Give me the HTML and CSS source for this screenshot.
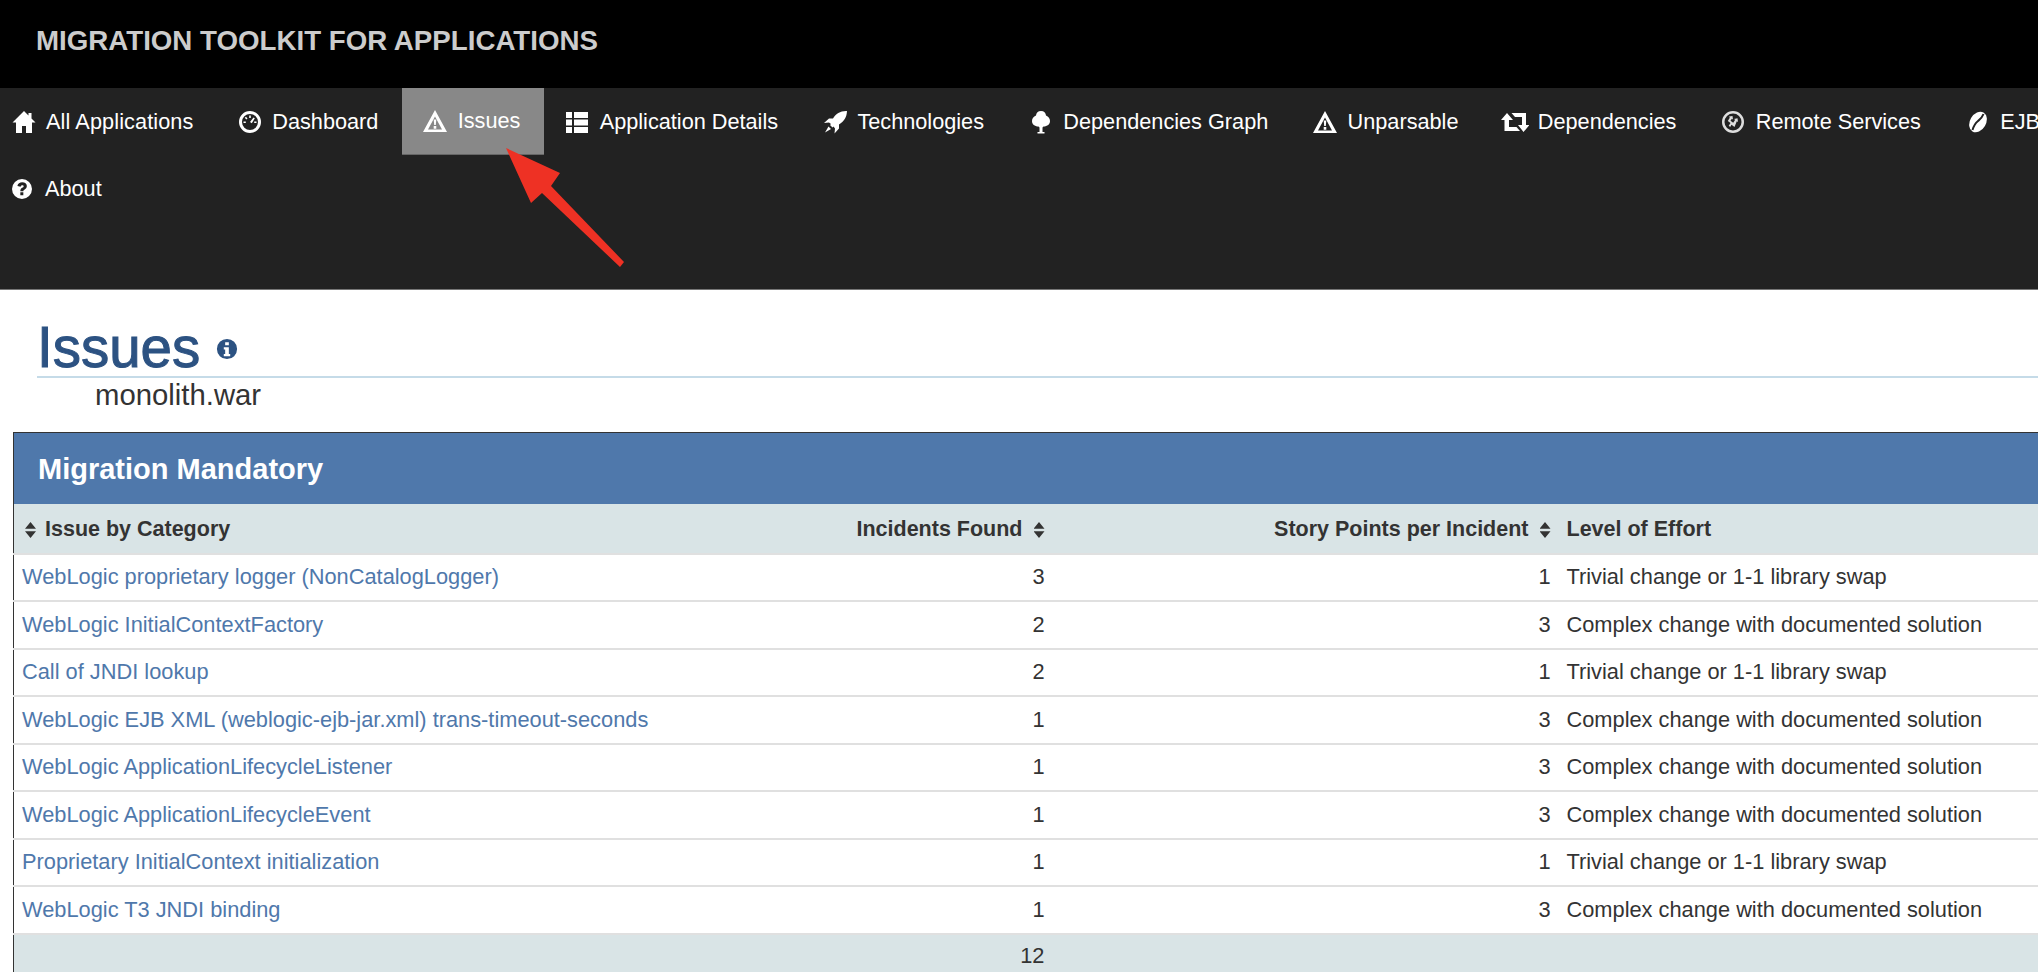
FILE: index.html
```html
<!DOCTYPE html>
<html lang="en">
<head>
<meta charset="utf-8">
<title>Issues - Migration Toolkit for Applications</title>
<link rel="stylesheet" href="styles.css">
</head>
<body>
<div class="page">
  <header class="brand">MIGRATION TOOLKIT FOR APPLICATIONS</header>
  <nav class="nav">
    <a class="nav-item edge home"><svg class="ico" viewBox="0 0 24 24"><path d="M12 1 .5 12.500h3.500V23h6v-7h4v7h6V12.500h3.500L19.500 8.500V3h-3v2.500z"/></svg>All Applications</a>
    <a class="nav-item"><svg class="ico" viewBox="0 0 24 24"><path fill-rule="evenodd" d="M12 1a11 11 0 1 0 0 22 11 11 0 0 0 0-22zm0 3a8 8 0 1 1 0 16 8 8 0 0 1 0-16z"/><path d="M11.200 5.500h1.600v2.500h-1.600zM6.800 7.800l1.200-1 1.500 1.800-1.200 1zM15.500 7.500l1.300.8-3 5-1.800-1.200zM5.500 11.500h2.300v1.500H5.500zM16.200 11.500h2.300v1.500h-2.300z"/></svg>Dashboard</a>
    <a class="nav-item active"><svg class="ico" viewBox="0 0 24 24"><path fill-rule="evenodd" d="M12 1 0 23h24zm0 6.500L19 20.500H5z"/><path d="M10.700 10.500h2.600l-.5 5.500h-1.600zM10.700 17h2.600v2.800h-2.600z"/></svg>Issues</a>
    <a class="nav-item"><svg class="ico" viewBox="0 0 24 24"><path d="M1 2h6v6H1zM1 9.500h6v6H1zM1 17h6v6H1zM9 2h14v6H9zM9 9.500h14v6H9zM9 17h14v6H9z"/></svg>Application Details</a>
    <a class="nav-item"><svg class="ico" viewBox="0 0 24 24"><path d="M23 1c-6 .3-10 2.500-13 7.500H6L1 13l5-.5 2 1.500-1 1 2.500 2.500 1-1 1.500 2-.5 5 4.500-5v-4c5-3 7.700-7 8-13.500zM5.500 16.500 2 22.500l6-3.500z"/></svg>Technologies</a>
    <a class="nav-item"><svg class="ico" viewBox="0 0 24 24"><path d="M12 1C9 1 7.200 3 7 5.500 4.500 6.500 3 8.500 3 11c0 3.200 2.700 5.500 6.500 5.500l1 1V22H8.500v1.500h7V22h-2v-4.500l1-1C18.300 16.500 21 14.200 21 11c0-2.500-1.500-4.500-4-5.500C16.800 3 15 1 12 1z"/></svg>Dependencies Graph</a>
    <a class="nav-item"><svg class="ico" viewBox="0 0 24 24"><path fill-rule="evenodd" d="M12 1 0 23h24zm0 6.500L19 20.500H5z"/><path d="M10.700 10.500h2.600l-.5 5.500h-1.600zM10.700 17h2.600v2.800h-2.600z"/></svg>Unparsable</a>
    <a class="nav-item"><svg class="ico ico-wide" viewBox="0 0 28 24"><path d="M6 3 0 10h3.500v11H19l-3.500-4H8V10h4zM10.500 3l3.500 4h7v8h-4l5.500 7 6-7h-3.500V3z"/></svg>Dependencies</a>
    <a class="nav-item"><svg class="ico" viewBox="0 0 24 24"><path fill-rule="evenodd" opacity=".85" d="M12 1a11 11 0 1 0 0 22 11 11 0 0 0 0-22zm0 2.500a8.500 8.500 0 1 1 0 17 8.500 8.500 0 0 1 0-17z"/><path opacity=".85" d="M8 6.500l3.500-.5.500 3.500-1.200-.8-1.300 2 2.700 2 2-3-1.300-.7 3.600-.8.500 3.800-1.200-.8L13.500 17l-3-2.200-1.300 2.200-1.500-1.200 1.800-2.800-2.700-2 2-3.300z"/></svg>Remote Services</a>
    <a class="nav-item"><svg class="ico" viewBox="0 0 24 24"><ellipse cx="12" cy="12" rx="8" ry="11" transform="rotate(30 12 12)"/><path class="bean-line" d="M17.500 4C16 8 14.500 9 12 11s-4 4-5.500 9"/></svg>EJBs</a>
    <a class="nav-item edge about"><svg class="ico ico-sm" viewBox="0 0 24 24"><path fill-rule="evenodd" d="M12 0a12 12 0 1 0 0 24 12 12 0 0 0 0-24zm.3 4c3.300 0 5.500 1.800 5.500 4.500 0 2.200-1.300 3.400-2.900 4.300-1 .6-1.300 1.100-1.300 1.900H10c0-2.100.8-3.200 2.200-4.100 1.100-.7 1.800-1.100 1.800-2 0-.8-.6-1.200-1.600-1.200-1.100 0-1.900.7-2.200 2L6.500 8.300C7.100 5.600 9.200 4 12.300 4zM10 16h3.600v3.500H10z"/></svg>About</a>
  </nav>
  <main>
    <section class="heading">
      <h1 class="title">Issues <svg class="info" viewBox="0 0 24 24"><path fill-rule="evenodd" d="M12 1a11 11 0 1 0 0 22 11 11 0 0 0 0-22zM10 4.500h4v3.500h-4zM8.500 10H14v7.500h1.500V20h-7v-2.500H10V12.500H8.500z"/></svg></h1>
      <div class="subtitle">monolith.war</div>
    </section>
    <table class="issues">
      <colgroup><col class="c1"><col class="c2"><col class="c3"><col class="c4"></colgroup>
      <thead>
        <tr class="band"><th colspan="4">Migration Mandatory</th></tr>
        <tr class="cols">
          <th class="left first"><span class="sort sort-l"></span>Issue by Category</th>
          <th class="num">Incidents Found<span class="sort sort-r"></span></th>
          <th class="num">Story Points per Incident<span class="sort sort-r"></span></th>
          <th class="left">Level of Effort</th>
        </tr>
      </thead>
      <tbody>
        <tr><td><a>WebLogic proprietary logger (NonCatalogLogger)</a></td><td class="num">3</td><td class="num">1</td><td>Trivial change or 1-1 library swap</td></tr>
        <tr><td><a>WebLogic InitialContextFactory</a></td><td class="num">2</td><td class="num">3</td><td>Complex change with documented solution</td></tr>
        <tr><td><a>Call of JNDI lookup</a></td><td class="num">2</td><td class="num">1</td><td>Trivial change or 1-1 library swap</td></tr>
        <tr><td><a>WebLogic EJB XML (weblogic-ejb-jar.xml) trans-timeout-seconds</a></td><td class="num">1</td><td class="num">3</td><td>Complex change with documented solution</td></tr>
        <tr><td><a>WebLogic ApplicationLifecycleListener</a></td><td class="num">1</td><td class="num">3</td><td>Complex change with documented solution</td></tr>
        <tr><td><a>WebLogic ApplicationLifecycleEvent</a></td><td class="num">1</td><td class="num">3</td><td>Complex change with documented solution</td></tr>
        <tr><td><a>Proprietary InitialContext initialization</a></td><td class="num">1</td><td class="num">1</td><td>Trivial change or 1-1 library swap</td></tr>
        <tr><td><a>WebLogic T3 JNDI binding</a></td><td class="num">1</td><td class="num">3</td><td>Complex change with documented solution</td></tr>
      </tbody>
      <tfoot>
        <tr><td></td><td class="num">12</td><td></td><td></td></tr>
      </tfoot>
    </table>
  </main>
  <svg class="arrow" viewBox="0 0 140 130"><path d="M6 8 60 33 51 46 124 122 120 127 42 53 31 63z"/></svg>
</div>
</body>
</html>
```
FILE: styles.css
```css
html, body { margin: 0; padding: 0; height: 972px; overflow: hidden; background: #fff; }
.page { position: relative; width: 2120px; height: 972px; overflow: hidden; font-family: "Liberation Sans", Arial, sans-serif; color: #333; }
.brand { height: 88px; box-sizing: border-box; background: #000; color: #ccc; font-size: 27.700px; font-weight: 700; line-height: 82px; padding-left: 36px; }
.nav { height: 202px; box-sizing: border-box; background: #222; border-bottom: 1px solid #777; display: flex; flex-wrap: wrap; align-content: flex-start; }
.nav-item { display: flex; align-items: center; gap: 10.300px; height: 67px; padding: 0 24px 0 21px; box-sizing: border-box; color: #fff; font-size: 21.700px; }
.nav-item.edge { padding-left: 12px; gap: 10px; }
.nav-item.home { padding-right: 23.500px; letter-spacing: 0.1px; }
.nav-item.active { background: #888; border-bottom: 1px solid #666; }
.ico { width: 24px; height: 24px; fill: #fff; flex: none; }
.ico-wide { width: 28px; margin: 0 -2px; }
.ico-sm { width: 20px; height: 20px; margin-right: 3px; }
.bean-line { fill: none; stroke: #222; stroke-width: 2; }
.heading { padding: 0 0 0 37px; }
.title { margin: 0; height: 88px; box-sizing: border-box; border-bottom: 2px solid #c5dbe8; padding-top: 29px; font-size: 56.500px; line-height: 58px; font-weight: 400; color: #2c5282; -webkit-text-stroke: 1px #2c5282; }
.info { width: 22px; height: 22px; fill: #2c5282; vertical-align: 7px; stroke: none; }
.subtitle { margin-left: 58px; font-size: 29.300px; line-height: 34px; color: #333; }
.issues { margin: 20px 0 0 13px; width: 2090px; table-layout: fixed; border-collapse: collapse; border: 1px solid #333; font-size: 21.800px; }
.c1 { width: 819px; }
.c2 { width: 220px; }
.c3 { width: 506px; }
.band th { height: 71px; padding: 2px 0 0 24px; box-sizing: border-box; background: #4f78ab; color: #fff; text-align: left; font-size: 29px; font-weight: 700; }
.cols th { height: 50px; padding: 3px 8px 0; box-sizing: border-box; background: #d9e4e6; font-size: 21.500px; font-weight: 700; text-align: left; color: #333; }
.cols th.first { padding-left: 11px; }
td { height: 47.500px; box-sizing: border-box; padding: 0 8px; border-top: 2px solid #e0e0e0; }
tbody td a { color: #4f78ab; }
.num, .cols th.num { text-align: right; }
tfoot td { background: #d9e4e6; height: 47px; padding-bottom: 3px; }
.sort { display: inline-block; width: 11px; height: 16px; vertical-align: -2px; background: #333; clip-path: polygon(50% 0, 100% 42%, 0 42%, 0 58%, 100% 58%, 50% 100%, 0 58%, 0 42%); }
.sort-l { margin-right: 9px; }
.sort-r { margin-left: 11px; }
.arrow { position: absolute; left: 500px; top: 140px; width: 140px; height: 130px; fill: #ee3124; }
```
